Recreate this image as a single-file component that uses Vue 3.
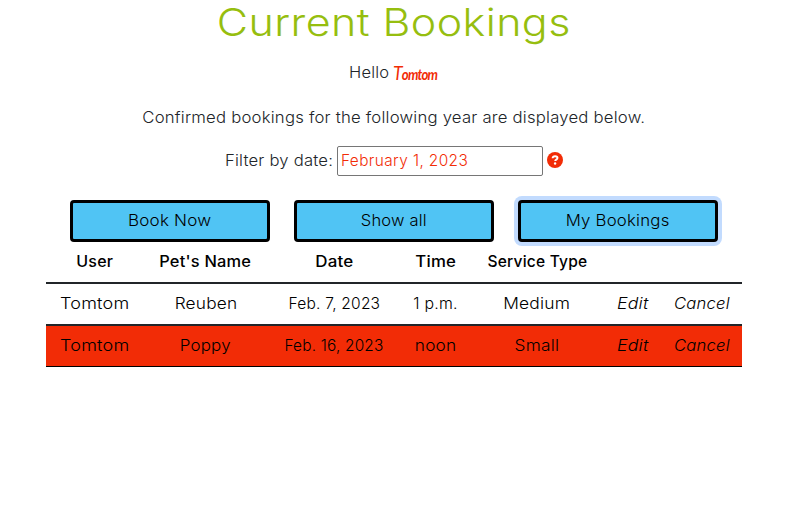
<script setup>
import { ref } from 'vue'

const filterDate = ref('February 1, 2023')
const actions = [
  { label: 'Book Now', stretch: 1.105 },
  { label: 'Show all', stretch: 1.07 },
  { label: 'My Bookings', stretch: 1.09, focused: true }
]
const headings = [
  { label: 'User', stretch: 1.04 },
  { label: "Pet's Name", stretch: 1.065 },
  { label: 'Date', stretch: 1.1 },
  { label: 'Time', stretch: 1.09 },
  { label: 'Service Type', stretch: 1.01 },
  { label: '', stretch: 1 },
  { label: '', stretch: 1 }
]
const cell = (text, stretch) => ({ text, stretch })
const bookings = [
  {
    own: false,
    cells: [cell('Tomtom', 1.17), cell('Reuben', 1.12), cell('Feb. 7, 2023', 1.01), cell('1 p.m.', 1.03), cell('Medium', 1.13)]
  },
  {
    own: true,
    cells: [cell('Tomtom', 1.17), cell('Poppy', 1.1), cell('Feb. 16, 2023', 1), cell('noon', 1.12), cell('Small', 1.12)]
  }
]
const wide = (n) => ({ transform: `scaleX(${n})` })
</script>

<template>
  <main class="page">
    <h1><span class="t">Current Bookings</span></h1>
    <p class="hello"><span class="t">Hello</span><span class="name">Tomtom</span></p>
    <p class="intro"><span class="t">Confirmed bookings for the following year are displayed below.</span></p>
    <div class="filter">
      <label for="date"><span class="t">Filter by date:</span></label>
      <input id="date" v-model="filterDate" type="text" />
      <svg class="help" viewBox="0 0 16 16">
        <circle cx="8" cy="8" r="8" fill="#f22c06" />
        <path d="M5.6 6.3C5.7 4.9 6.7 4.2 8.1 4.2c1.4 0 2.4.8 2.4 1.9 0 1.7-2.3 1.4-2.3 3" fill="none" stroke="#fff" stroke-width="1.9" />
        <circle cx="8.1" cy="11.5" r="1.2" fill="#fff" />
      </svg>
    </div>
    <div class="actions">
      <button v-for="a in actions" :key="a.label" :class="{ focused: a.focused }">
        <span class="t" :style="wide(a.stretch)">{{ a.label }}</span>
      </button>
    </div>
    <table>
      <colgroup>
        <col class="c1" /><col class="c2" /><col class="c3" /><col class="c4" /><col class="c5" /><col class="c6" /><col class="c7" />
      </colgroup>
      <thead>
        <tr>
          <th v-for="(h, i) in headings" :key="i"><span class="t" :style="wide(h.stretch)">{{ h.label }}</span></th>
        </tr>
      </thead>
      <tbody>
        <tr v-for="(b, r) in bookings" :key="r" :class="{ own: b.own }">
          <td v-for="(c, i) in b.cells" :key="i"><span class="t" :style="wide(c.stretch)">{{ c.text }}</span></td>
          <td><i class="t edit">Edit</i></td>
          <td><i class="t cancel">Cancel</i></td>
        </tr>
      </tbody>
    </table>
  </main>
</template>

<style>
body {
  background: #fff;
}
</style>

<style scoped>
.page {
  box-sizing: border-box;
  width: 788px;
  height: 523px;
  overflow: hidden;
  font-family: Inter, "Open Sans", sans-serif;
  font-size: 15.4px;
  font-weight: 300;
  line-height: 24px;
  letter-spacing: 0.2px;
  color: #212529;
  text-align: center;
}
.t {
  display: inline-block;
  white-space: nowrap;
}
h1 {
  margin: 0;
  height: 48px;
  font-size: 38.5px;
  font-weight: 300;
  line-height: 44px;
  letter-spacing: 0.4px;
  color: #96be0f;
}
h1 .t {
  transform: scaleX(1.115);
}
p {
  margin: 0;
}
.hello {
  display: flex;
  justify-content: center;
  gap: 4px;
  height: 24px;
  margin-top: 13px;
}
.hello .t {
  width: 40px;
  text-align: left;
  transform: scaleX(1.07);
  transform-origin: left;
}
.name {
  display: block;
  width: 46px;
  font-family: Lato, sans-serif;
  font-size: 15px;
  font-style: italic;
  font-weight: 700;
  line-height: 22px;
  letter-spacing: -0.9px;
  text-align: left;
  transform: scaleX(0.88);
  transform-origin: left;
  color: #f22c06;
}
.name::first-letter {
  font-size: 20px;
  font-weight: 400;
}
.intro {
  margin-top: 21px;
}
.intro .t {
  transform: scaleX(1.085);
}
.filter {
  display: flex;
  align-items: center;
  justify-content: center;
  height: 30px;
  margin-top: 16px;
}
.filter label {
  width: 108px;
  text-align: left;
}
.filter label .t {
  transform: scaleX(1.08);
  transform-origin: left;
}
.filter input {
  box-sizing: border-box;
  width: 206px;
  height: 30px;
  margin: 0 4px;
  padding: 0 2px 1px 3px;
  border: 1px solid #767676;
  border-radius: 2px;
  outline: none;
  font: inherit;
  letter-spacing: 0.4px;
  color: #f22c06;
}
.help {
  width: 16px;
  height: 16px;
  margin-bottom: 2px;
}
.actions {
  display: flex;
  gap: 24px;
  justify-content: center;
  margin-top: 24px;
}
button {
  box-sizing: border-box;
  width: 200px;
  height: 42px;
  padding: 0;
  border: 3px solid #000;
  border-radius: 4px;
  background: #50c4f4;
  font: inherit;
  letter-spacing: 0.2px;
  color: #000;
}
.focused {
  box-shadow: 0 0 0 4px #c2dbfe;
}
table {
  width: 696px;
  margin-left: 46px;
  table-layout: fixed;
  border-collapse: separate;
  border-spacing: 0;
  color: #000;
}
.c1 { width: 97px; }
.c2 { width: 125px; }
.c3 { width: 132px; }
.c4 { width: 71px; }
.c5 { width: 132px; }
.c6 { width: 59px; }
.c7 { width: 80px; }
th, td {
  box-sizing: border-box;
  height: 42px;
  padding: 0;
  border-bottom: 2px solid #212529;
  white-space: nowrap;
}
th {
  font-weight: 500;
}
.own td {
  height: 41px;
  border-bottom: 1px solid #000;
  background: #f22c06;
}
.edit {
  transform: scaleX(1.15);
}
.cancel {
  transform: scaleX(1.08);
}
</style>
